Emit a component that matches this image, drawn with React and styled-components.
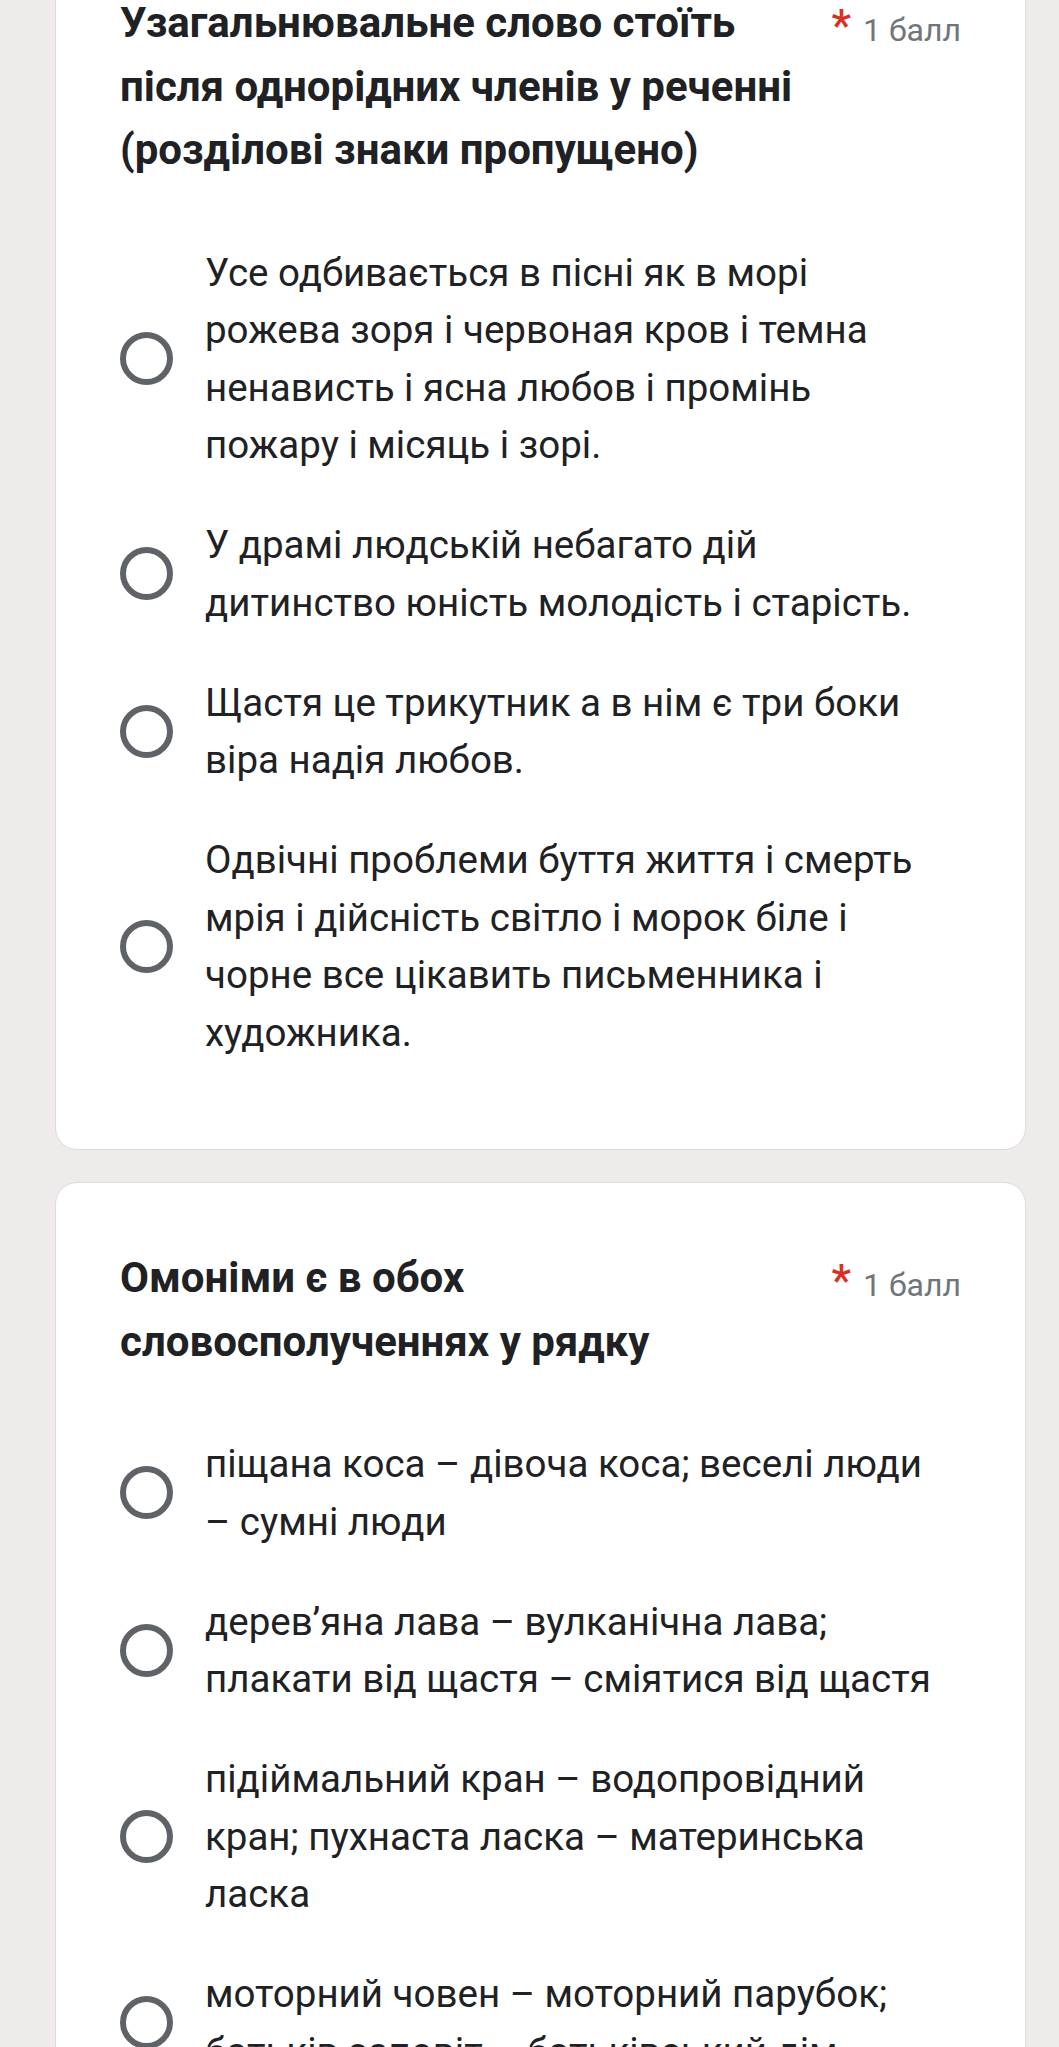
import React from 'react';
import styled, { createGlobalStyle } from 'styled-components';

const GlobalStyle = createGlobalStyle`
  html, body {
    margin: 0;
    padding: 0;
    background: #eeebea;
  }
  body {
    font-family: Roboto, "Liberation Sans", Arial, sans-serif;
    color: #202124;
    overflow: hidden;
  }
`;

const Page = styled.main`
  display: flex;
  flex-direction: column;
  gap: 32px;
  padding: 0 33px 0 55px;
  margin-top: -73px;
`;

const Card = styled.section`
  background: #fff;
  border: 1px solid #dadce0;
  border-radius: 22px;
  padding: 63px 64px 88px 64px;
`;

const Header = styled.div`
  display: flex;
  align-items: flex-start;
  justify-content: space-between;
`;

const Title = styled.h2`
  margin: 0;
  font-size: 42px;
  line-height: 63.5px;
  font-weight: 700;
  color: #202124;
  max-width: 700px;
`;

const Points = styled.div`
  display: flex;
  align-items: baseline;
  flex-shrink: 0;
  margin-left: 20px;
  font-size: 32px;
  line-height: 63.5px;
  color: #70757a;
  padding-top: 4px;
`;

const Required = styled.span`
  color: #d93025;
  font-size: 44px;
  font-weight: 500;
  margin-right: 12px;
  margin-left: 2px;
`;

const Options = styled.ul`
  list-style: none;
  margin: 62px 0 0 0;
  padding: 0;
  display: flex;
  flex-direction: column;
  gap: 42.5px;
`;

const Option = styled.li`
  display: flex;
  align-items: center;
  padding-right: 22px;
`;

const Radio = styled.span`
  box-sizing: border-box;
  flex-shrink: 0;
  width: 53px;
  height: 53px;
  border: 6px solid #5f6368;
  border-radius: 50%;
  margin-right: 32px;
`;

const Label = styled.span`
  font-size: 38.5px;
  line-height: 57.5px;
  color: #202124;
`;

const questions = [
  {
    id: 1,
    title: 'Узагальнювальне слово стоїть після однорідних членів у реченні (розділові знаки пропущено)',
    options: [
      'Усе одбивається в пісні як в морі рожева зоря і червоная кров і темна ненависть і ясна любов і промінь пожару і місяць і зорі.',
      'У драмі людській небагато дій дитинство юність молодість і старість.',
      'Щастя це трикутник а в нім є три боки віра надія любов.',
      'Одвічні проблеми буття життя і смерть мрія і дійсність світло і морок біле і чорне все цікавить письменника і художника.',
    ],
  },
  {
    id: 2,
    title: 'Омоніми є в обох словосполученнях у рядку',
    options: [
      'піщана коса – дівоча коса; веселі люди – сумні люди',
      'дерев’яна лава – вулканічна лава; плакати від щастя – сміятися від щастя',
      'підіймальний кран – водопровідний кран; пухнаста ласка – материнська ласка',
      'моторний човен – моторний парубок; батьків заповіт – батьківський дім',
    ],
  },
];

export default function App() {
  return (
    <>
      <GlobalStyle />
      <Page>
        {questions.map(q => (
          <Card key={q.id}>
            <Header>
              <Title>{q.title}</Title>
              <Points>
                <Required>*</Required>1 балл
              </Points>
            </Header>
            <Options>
              {q.options.map(text => (
                <Option key={text}>
                  <Radio />
                  <Label>{text}</Label>
                </Option>
              ))}
            </Options>
          </Card>
        ))}
      </Page>
    </>
  );
}
